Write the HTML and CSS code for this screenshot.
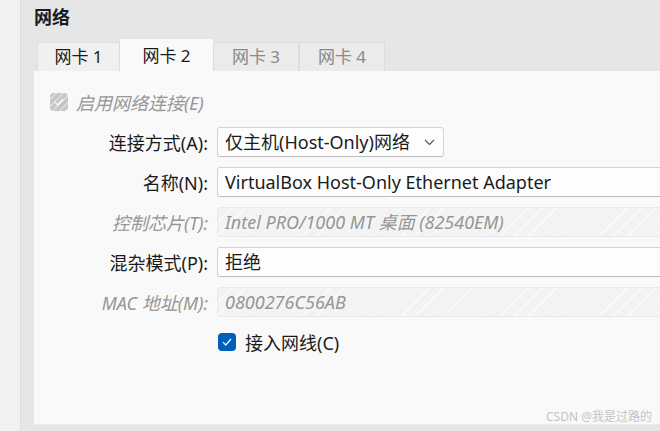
FILE: index.html
```html
<!DOCTYPE html>
<html lang="zh">
<head>
<meta charset="utf-8">
<link rel="stylesheet" href="styles.css">
</head>
<body>
<div class="side"></div>
<div class="main">
  <div class="title">网络</div>
  <div class="tabs">
    <div class="tab">网卡 1</div>
    <div class="tab active">网卡 2</div>
    <div class="tab dim">网卡 3</div>
    <div class="tab dim">网卡 4</div>
  </div>
  <div class="panel">
    <div class="enable">
      <span class="cb cb-dis"><svg width="10" height="8" viewBox="0 0 10 8"><path d="M1 4.2 L3.8 7 L9 1" fill="none" stroke="#fff" stroke-width="1.2"/></svg></span>
      <span class="dis-label">启用网络连接(E)</span>
    </div>
    <div class="form">
      <div class="lbl">连接方式(A):</div>
      <div class="field select"><span>仅主机(Host-Only)网络</span><svg class="chev" width="11" height="7" viewBox="0 0 11 7"><path d="M1 1 L5.5 5.5 L10 1" fill="none" stroke="#555" stroke-width="1.1"/></svg></div>

      <div class="lbl">名称(N):</div>
      <div class="field wide">VirtualBox Host-Only Ethernet Adapter</div>

      <div class="lbl dimlbl">控制芯片(T):</div>
      <div class="field wide disabled">Intel PRO/1000 MT 桌面 (82540EM)</div>

      <div class="lbl">混杂模式(P):</div>
      <div class="field wide">拒绝</div>

      <div class="lbl dimlbl">MAC 地址(M):</div>
      <div class="field wide disabled">0800276C56AB</div>

      <div></div>
      <div class="cable">
        <span class="cb cb-on"><svg width="10" height="8" viewBox="0 0 10 8"><path d="M1 4.2 L3.8 7 L9 1" fill="none" stroke="#fff" stroke-width="1.2"/></svg></span>
        <span>接入网线(C)</span>
      </div>
    </div>
    <div class="wm">CSDN @我是过路的</div>
  </div>
</div>
</body>
</html>
```

FILE: styles.css
```css
* { box-sizing: border-box; }
html, body { margin: 0; padding: 0; }
body {
  width: 660px;
  height: 431px;
  overflow: hidden;
  display: flex;
  font-family: "Noto Sans", "Noto Sans CJK SC", sans-serif;
  color: #1b1b1b;
  background: #e6e6e6;
}
.side {
  width: 21px;
  flex: none;
  background: #f1f1f1;
  border-right: 1px solid #dcdcdc;
}
.main {
  flex: 1;
  display: flex;
  flex-direction: column;
  padding-left: 13px;
  min-width: 0;
}
.title {
  font-weight: bold;
  font-size: 18px;
  line-height: 22px;
  margin-top: 6px;
  height: 33px;
}
.tabs {
  display: flex;
  align-items: flex-end;
  padding-left: 3px;
  height: 32px;
}
.tab {
  height: 29px;
  width: 83px;
  background: #f0f0f0;
  border: 1px solid #dcdcdc;
  border-bottom: none;
  font-size: 17px;
  line-height: 28px;
  text-align: center;
  color: #1b1b1b;
}
.tab.active {
  height: 33px;
  width: 93px;
  background: #f9f9f9;
  border: none;
  line-height: 34px;
  position: relative;
  top: 1px;
}
.tab.dim {
  background: #ebebeb;
  color: #8a8a8a;
  width: 86px;
}
.panel {
  background: #f9f9f9;
  height: 354px;
  padding: 22px 0 0 16px;
  position: relative;
  overflow: hidden;
  border-bottom: 1px solid #ebebeb;
}
.enable {
  display: flex;
  align-items: center;
  gap: 8px;
  height: 18px;
}
.cb {
  width: 18px;
  height: 18px;
  border-radius: 4px;
  display: inline-flex;
  align-items: center;
  justify-content: center;
  flex: none;
}
.cb-dis {
  background: repeating-linear-gradient(135deg, #c6c6c6 0 4px, #dedede 4px 5px);
}
.cb-on {
  background: #005fb8;
}
.dis-label {
  font-style: italic;
  color: #969696;
  font-size: 18px;
}
.form {
  display: grid;
  grid-template-columns: 158px 520px;
  column-gap: 9px;
  row-gap: 10px;
  margin-top: 16px;
  align-items: center;
}
.lbl {
  text-align: right;
  font-size: 18px;
  white-space: nowrap;
}
.dimlbl {
  font-style: italic;
  color: #969696;
}
.field {
  height: 30px;
  background: #fdfdfd;
  border: 1px solid #d3d3d3;
  border-bottom-color: #bdbdbd;
  border-radius: 3px;
  font-size: 18px;
  line-height: 28px;
  padding-left: 7px;
  white-space: nowrap;
}
.select {
  width: 227px;
  display: flex;
  align-items: center;
  justify-content: space-between;
  padding-right: 8px;
}
.wide {
  width: 520px;
}
.disabled {
  background: repeating-linear-gradient(135deg, #f3f3f3 0 9px, #fbfbfb 9px 10px);
  border-color: #e9e9e9;
  font-style: italic;
  color: #969696;
}
.cable {
  display: flex;
  align-items: center;
  gap: 9px;
  font-size: 18px;
  margin-top: 2px;
  margin-left: 1px;
}
.wm {
  position: absolute;
  right: 8px;
  top: 339px;
  font-size: 12px;
  line-height: 14px;
  color: #c4c4c4;
}
```
